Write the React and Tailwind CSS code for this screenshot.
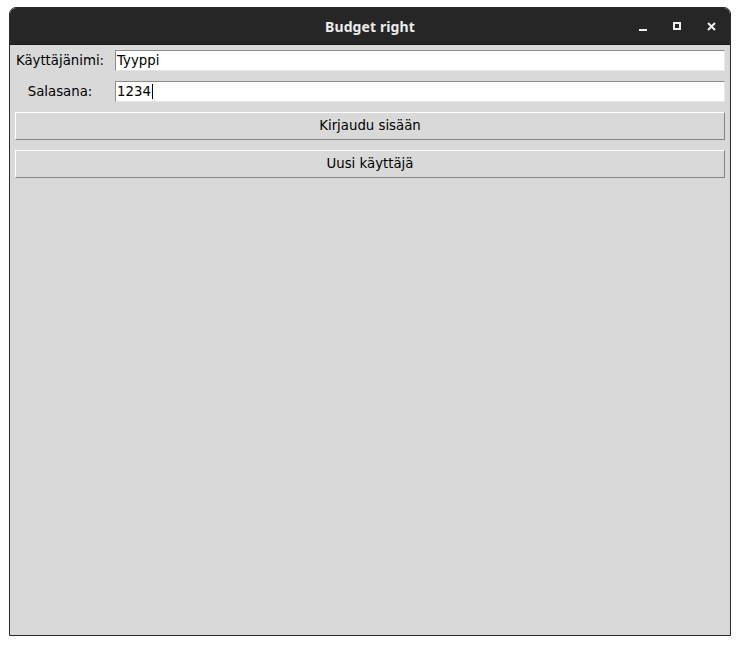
export default function App() {

    const uiFont = { fontFamily: '"DejaVu Sans", sans-serif' };

    return (

        <div className="w-[740px] h-[645px] bg-white pt-[7px] pl-[9px]" style={uiFont}>

            {/* WINDOW */}

            <div className="w-[722px] h-[629px] flex flex-col rounded-t-[7px] overflow-hidden border border-[#2b2b2b]">

                {/* TITLE BAR */}

                <div className="relative h-[37px] bg-[#262626] border-b border-[#1a1a1a] flex items-center justify-center">

                    <span className="text-[14px] font-bold text-[#ececec] tracking-[0.1px]" style={{ fontFamily: '"Noto Sans", "DejaVu Sans", sans-serif' }}>
                        Budget right
                    </span>

                    <div className="absolute right-[14px] top-0 h-full flex items-center gap-[26px]">

                        <div className="w-[8px] h-[8px] flex items-end">
                            <div className="w-[8px] h-[2px] bg-[#efefef] translate-y-[1px]"></div>
                        </div>

                        <div className="w-[8px] h-[8px] border-2 border-[#efefef]"></div>

                        <svg width="9" height="9" viewBox="0 0 9 9">
                            <path d="M1 1 L8 8 M8 1 L1 8" stroke="#efefef" strokeWidth="2" />
                        </svg>

                    </div>

                </div>

                {/* CONTENT */}

                <div className="flex-1 bg-[#d9d9d9] pt-[5px] px-[5px] flex flex-col gap-[10px] text-[13.3px] text-black">

                    <div className="grid grid-cols-[90px_1fr] gap-x-[10px] items-center">
                        <span className="text-center">Käyttäjänimi:</span>
                        <div className="h-[21px] bg-white border border-t-[#8c8c8c] border-l-[#8c8c8c] border-r-[#e8e8e8] border-b-[#e8e8e8] flex items-center pl-[1px]">
                            Tyyppi
                        </div>
                    </div>

                    <div className="grid grid-cols-[90px_1fr] gap-x-[10px] items-center">
                        <span className="text-center">Salasana:</span>
                        <div className="h-[21px] bg-white border border-t-[#8c8c8c] border-l-[#8c8c8c] border-r-[#e8e8e8] border-b-[#e8e8e8] flex items-center pl-[1px]">
                            1234
                            <span className="w-[1px] h-[15px] bg-black ml-[1px]"></span>
                        </div>
                    </div>

                    <button className="h-[28px] w-full bg-[#d9d9d9] border border-t-white border-l-white border-r-[#858585] border-b-[#858585]">
                        Kirjaudu sisään
                    </button>

                    <button className="h-[28px] w-full bg-[#d9d9d9] border border-t-white border-l-white border-r-[#858585] border-b-[#858585]">
                        Uusi käyttäjä
                    </button>

                </div>

            </div>

        </div>
    );
}
